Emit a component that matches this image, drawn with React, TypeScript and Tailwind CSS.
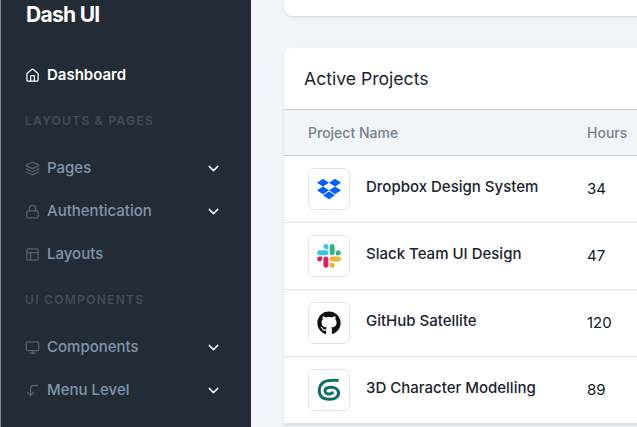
import { ChevronDown, CornerLeftDown, House, Layers, Lock, Monitor, PanelsTopLeft } from 'lucide-react';
import type { ReactNode } from 'react';
import { FaDropbox, FaGithub } from 'react-icons/fa';

function NavItem({ icon, label, active, hasMenu }: { icon: ReactNode; label: string; active?: boolean; hasMenu?: boolean }) {
  return (
    <a className={`flex h-[43px] items-center ${active ? 'text-white' : 'text-[#8096ad]'}`}>
      <span className={`flex w-[22px] ${active ? 'text-white' : 'text-[#566373]'}`}>{icon}</span>
      <span className={`text-[15px] ${active ? 'font-semibold' : 'font-medium'}`}>{label}</span>
      {hasMenu && <ChevronDown className="ml-auto h-[17px] w-[17px] text-white" strokeWidth={2} />}
    </a>
  );
}

function SectionLabel({ children }: { children: ReactNode }) {
  return <div className="text-[12px] leading-4 font-semibold tracking-[1.3px] text-[#434d5a]">{children}</div>;
}

function SlackLogo() {
  return (
    <svg viewBox="0 0 127 127" className="h-6 w-6">
      <path fill="#E01E5A" d="M27.2 80c0 7.3-5.9 13.2-13.2 13.2C6.7 93.2.8 87.3.8 80c0-7.3 5.9-13.2 13.2-13.2h13.2V80zm6.6 0c0-7.3 5.9-13.2 13.2-13.2 7.3 0 13.2 5.9 13.2 13.2v33c0 7.3-5.9 13.2-13.2 13.2-7.3 0-13.2-5.9-13.2-13.2V80z" />
      <path fill="#36C5F0" d="M47 27c-7.3 0-13.2-5.9-13.2-13.2C33.8 6.5 39.7.6 47 .6c7.3 0 13.2 5.9 13.2 13.2V27H47zm0 6.7c7.3 0 13.2 5.9 13.2 13.2 0 7.3-5.9 13.2-13.2 13.2H13.9C6.6 60.1.7 54.2.7 46.9c0-7.3 5.9-13.2 13.2-13.2H47z" />
      <path fill="#2EB67D" d="M99.9 46.9c0-7.3 5.9-13.2 13.2-13.2 7.3 0 13.2 5.9 13.2 13.2 0 7.3-5.9 13.2-13.2 13.2H99.9V46.9zm-6.6 0c0 7.3-5.9 13.2-13.2 13.2-7.3 0-13.2-5.9-13.2-13.2V13.8C66.9 6.5 72.8.6 80.1.6c7.3 0 13.2 5.9 13.2 13.2v33.1z" />
      <path fill="#ECB22E" d="M80.1 99.8c7.3 0 13.2 5.9 13.2 13.2 0 7.3-5.9 13.2-13.2 13.2-7.3 0-13.2-5.9-13.2-13.2V99.8h13.2zm0-6.6c-7.3 0-13.2-5.9-13.2-13.2 0-7.3 5.9-13.2 13.2-13.2h33.1c7.3 0 13.2 5.9 13.2 13.2 0 7.3-5.9 13.2-13.2 13.2H80.1z" />
    </svg>
  );
}

// teal spiral mark for the 3D project
function ModelLogo() {
  return (
    <svg viewBox="0 0 24 24" className="h-6 w-6" fill="none" stroke="#0b6e69" strokeWidth="3" strokeLinejoin="round">
      <path d="M21.5 2.5 C15 2 8.5 2.5 5.5 5 C2 8 1.2 14.5 3.8 18 C7 22.2 17.5 22.5 20.6 18 C22.8 15 21 10.6 17 9.6 C13 8.8 8.8 9.4 8 12 C7.4 14.6 10 16.4 13 16 L16.5 14.4" />
    </svg>
  );
}

const projects: { name: string; hours: number; logo: ReactNode }[] = [
  { name: 'Dropbox Design System', hours: 34, logo: <FaDropbox className="h-6 w-6 text-[#0061ff]" /> },
  { name: 'Slack Team UI Design', hours: 47, logo: <SlackLogo /> },
  { name: 'GitHub Satellite', hours: 120, logo: <FaGithub className="h-6 w-6 text-[#111]" /> },
  { name: '3D Character Modelling', hours: 89, logo: <ModelLogo /> },
];

const iconClass = 'h-[15px] w-[15px]';

export default function App() {
  return (
    <div className="flex h-[427px] w-[637px] overflow-hidden bg-[#f1f5f9] font-['Inter',sans-serif]">
      {/* Sidebar */}
      <aside className="h-full w-[251px] shrink-0 border-l border-[#8a8a8a] bg-[#222b36] pl-[24px] pr-[29px]">
        <div className="pt-[1px] pl-px text-[21px] leading-[28px] font-bold tracking-[-0.7px] text-white">Dash UI</div>
        <div className="mt-[25px]">
          <NavItem icon={<House className={iconClass} />} label="Dashboard" active />
        </div>
        <div className="mt-[16px] mb-[18px]">
          <SectionLabel>LAYOUTS &amp; PAGES</SectionLabel>
        </div>
        <NavItem icon={<Layers className={iconClass} />} label="Pages" hasMenu />
        <NavItem icon={<Lock className={iconClass} />} label="Authentication" hasMenu />
        <NavItem icon={<PanelsTopLeft className={iconClass} />} label="Layouts" />
        <div className="mt-[16px] mb-[18px]">
          <SectionLabel>UI COMPONENTS</SectionLabel>
        </div>
        <NavItem icon={<Monitor className={iconClass} />} label="Components" hasMenu />
        <NavItem icon={<CornerLeftDown className={iconClass} />} label="Menu Level" hasMenu />
      </aside>

      {/* Content */}
      <main className="min-w-0 flex-1 pl-[33px]">
        <div className="h-4 w-[500px] rounded-b-lg bg-white shadow-sm" />
        <section className="mt-8 w-[500px] rounded-t-lg bg-white shadow-sm">
          <h2 className="flex h-[61px] items-center pt-[1px] pl-[20px] text-[17.6px] font-normal text-[#1a2430]">Active Projects</h2>
          <div className="flex h-[47px] items-center border-y border-[#c9ced6] bg-[#f1f5f9] text-[14px] font-medium text-[#74808f]">
            <div className="w-[279px] pl-6">Project Name</div>
            <div className="pl-6">Hours</div>
          </div>
          {projects.map((p) => (
            <div key={p.name} className="flex h-[67px] items-center border-b border-[#dfe3e8]">
              <div className="flex w-[279px] items-center pl-6">
                <div className="flex h-[42px] w-[42px] items-center justify-center rounded-md border border-[#e2e6eb] bg-white">{p.logo}</div>
                <div className="ml-4 pb-1 text-[15px] font-medium text-[#1a2430]">{p.name}</div>
              </div>
              <div className="pl-6 text-[15px] text-[#111827]">{p.hours}</div>
            </div>
          ))}
        </section>
      </main>
    </div>
  );
}
